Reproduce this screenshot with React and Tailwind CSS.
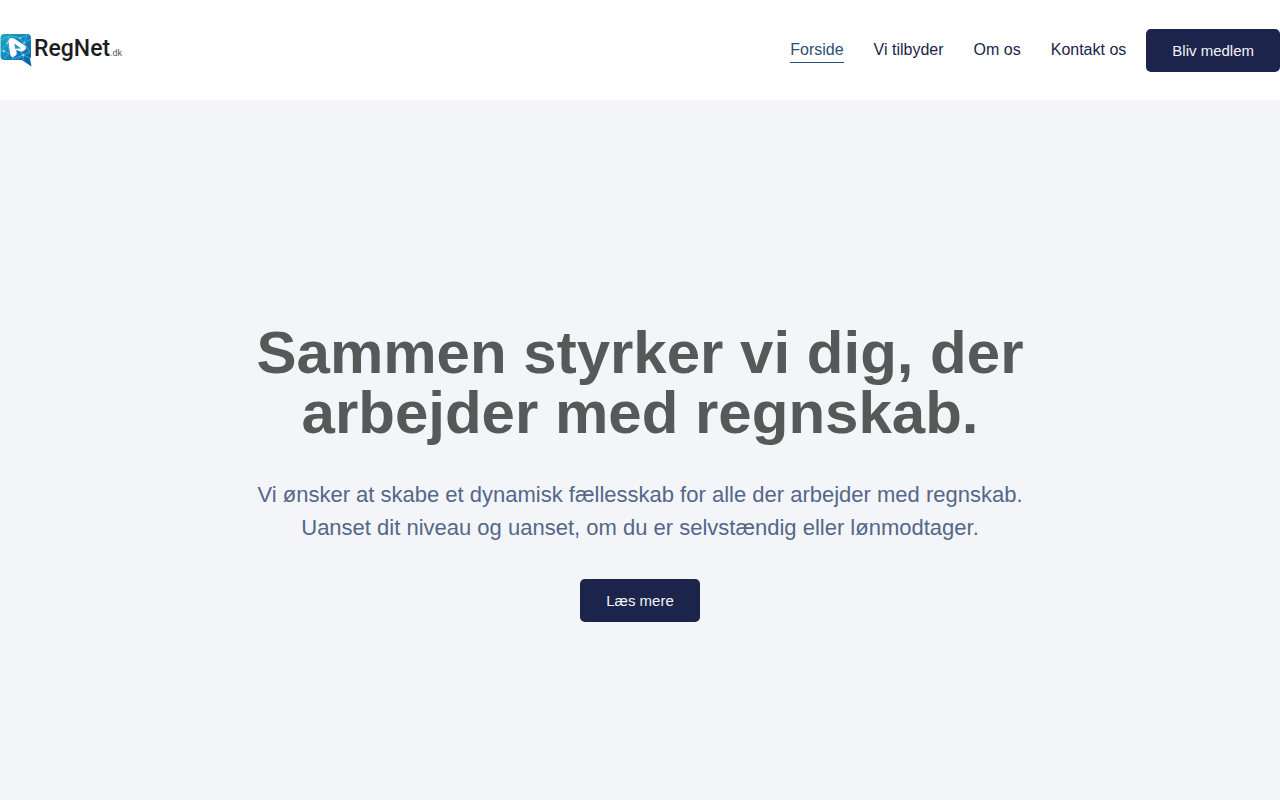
const navItems = [
  { label: 'Forside', href: '#forside', active: true },
  { label: 'Vi tilbyder', href: '#vi-tilbyder' },
  { label: 'Om os', href: '#om-os' },
  { label: 'Kontakt os', href: '#kontakt' }
];

const buttonClass =
  'inline-block rounded-[5px] bg-[#1c244b] px-[26px] py-3 text-[15px] leading-[19px] text-[#f3f5f8] hover:bg-[#2c4e73]';

function Logo() {
  return (
    <a href="#forside" aria-label="RegNet.dk" className="flex items-center gap-0.5">
      <svg viewBox="0 0 32 34" className="h-[34px] w-8 shrink-0" aria-hidden="true">
        <defs>
          <linearGradient id="logo-fill" x1="0" y1="0" x2="1" y2="1">
            <stop offset="0" stopColor="#1fa8bd" />
            <stop offset="0.5" stopColor="#1084bb" />
            <stop offset="1" stopColor="#0a5ba8" />
          </linearGradient>
        </defs>
        <path d="M4.500 1h22.500a4 4 0 0 1 4 4V23a4 4 0 0 1-1 2.800L31.500 33.500l-9.700-6.500H4.500A4 4 0 0 1 .5 23V5a4 4 0 0 1 4-4z" fill="url(#logo-fill)" />
        <g fill="none" stroke="#6cc4e6" strokeWidth="0.800" opacity="0.75">
          <path d="M1 7l8-4 11 2 7-3M9 3L7 10l-6 8 8 2-5 6M7 10l3 9 3 7M20 5l4 5 7-4M27 2l-3 8 6 9-7 3-4-5 5-7M10 19l3 7 10-4 1 5M23 22l7 3M23 22l-5 4" />
        </g>
        <g fill="#8fd6ee">
          <circle cx="7" cy="10" r="1" />
          <circle cx="20" cy="5" r="1" />
          <circle cx="24" cy="10" r="1" />
          <circle cx="23" cy="22" r="1.300" />
          <circle cx="4" cy="18" r="1.200" />
        </g>
        <path d="M10 5.500L14 6l11.500 7.500-.3 2.800-3.200 2-6.200-2.100.4 5.300-3 2.200-2.200-1L8.800 8z" fill="#fff" stroke="#fff" strokeWidth="1" strokeLinejoin="round" />
        <path d="M14.500 10.500l6.500 5-6 .2z" fill="#2797c9" />
      </svg>
      <span className="flex items-baseline pb-0.5 font-[Roboto,sans-serif] font-medium text-[#1d1d1f]">
        <span className="text-[23px] leading-7">RegNet</span>
        <span className="text-[9px] font-normal text-[#555]">.dk</span>
      </span>
    </a>
  );
}

function Header() {
  return (
    <header className="flex min-h-[100px] flex-wrap items-center justify-between bg-white">
      <Logo />
      <div className="flex flex-wrap items-center gap-5">
        <nav className="flex flex-wrap gap-[30px] text-base">
          {navItems.map((item) => (
            <a
              key={item.label}
              href={item.href}
              aria-current={item.active ? 'page' : undefined}
              className={
                item.active
                  ? 'border-b border-[#2c4e73] text-[#2c4e73]'
                  : 'border-b border-transparent text-[#1c244b] hover:text-[#2c4e73]'
              }
            >
              {item.label}
            </a>
          ))}
        </nav>
        <a href="#medlem" className={buttonClass}>
          Bliv medlem
        </a>
      </div>
    </header>
  );
}

function Hero() {
  return (
    <main className="flex flex-1 flex-col items-center px-6 pt-[223px] pb-[178px] text-center">
      <h1 className="max-w-[800px] text-[60px] leading-[60px] font-bold text-[#575958]">
        Sammen styrker vi dig, der arbejder med regnskab.
      </h1>
      <p className="mt-[35px] max-w-[800px] text-[22px] leading-[33px] text-[#546789]">
        Vi ønsker at skabe et dynamisk fællesskab for alle der arbejder med regnskab. Uanset dit
        niveau og uanset, om du er selvstændig eller lønmodtager.
      </p>
      <a href="#laes-mere" className={`mt-[35px] ${buttonClass}`}>
        Læs mere
      </a>
    </main>
  );
}

export default function App() {
  return (
    <div className="flex min-h-screen flex-col bg-[#f3f5f8] font-['Liberation_Sans',Arial,sans-serif]">
      <Header />
      <Hero />
    </div>
  );
}
